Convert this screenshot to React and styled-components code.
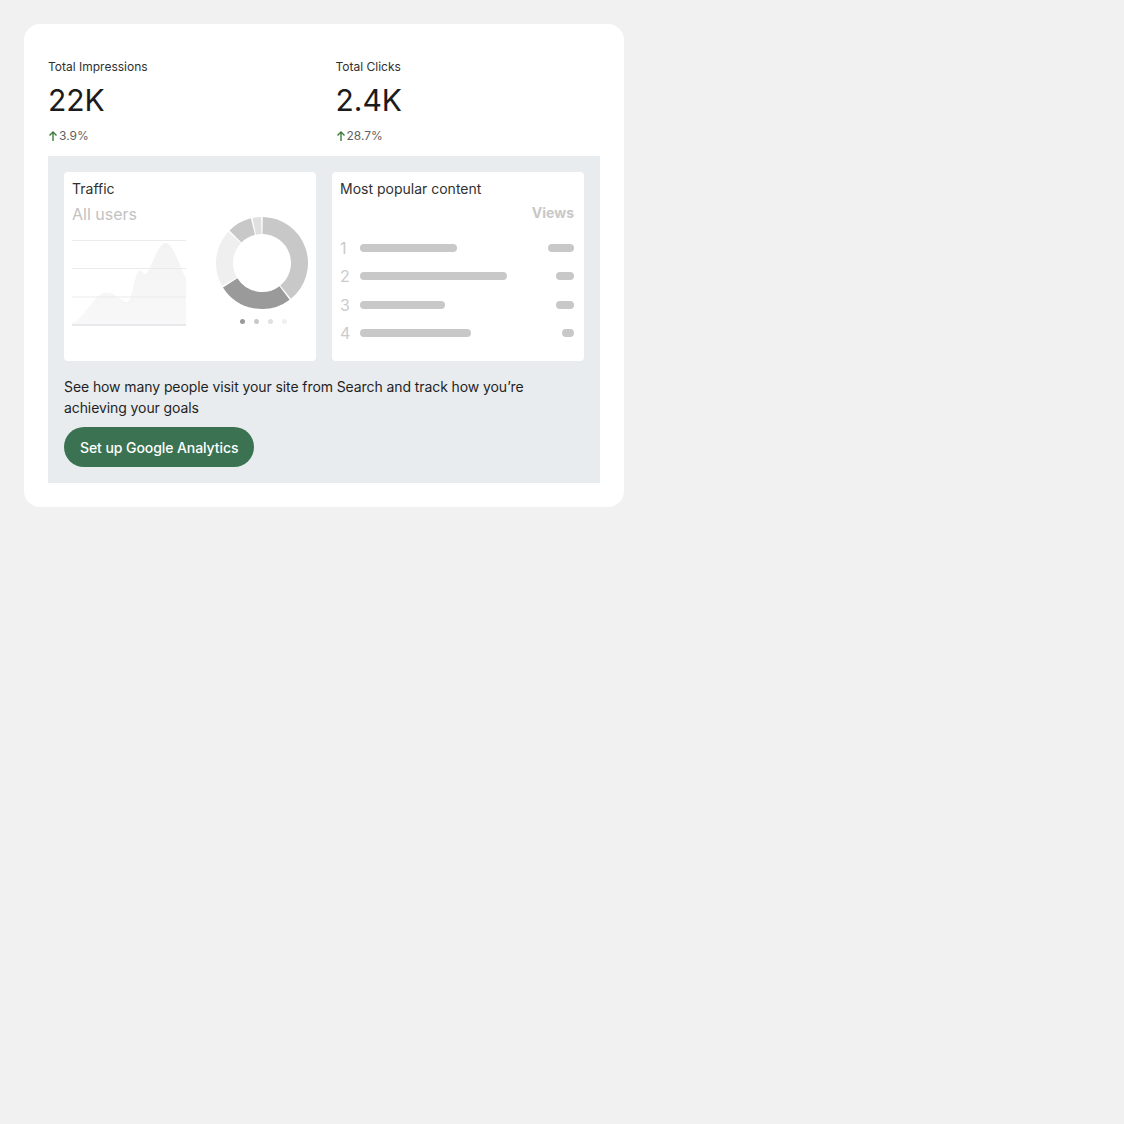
import styled, { createGlobalStyle } from 'styled-components'

const Global = createGlobalStyle`
  html, body {
    margin: 0;
    padding: 0;
    background: #f1f1f1;
    font-family: Inter, Roboto, "Noto Sans", Arial, sans-serif;
    color: #1f1f1f;
  }
`;

const Page = styled.div`
  padding: 24px;
`;

const Card = styled.div`
  width: 552px;
  background: #fff;
  border-radius: 16px;
  padding: 24px;
`;

const Stats = styled.div`
  display: grid;
  grid-template-columns: 1fr 1fr;
  column-gap: 23px;
  padding: 11px 0 12px;
`;

const Stat = styled.div`
  display: flex;
  flex-direction: column;
`;

const StatLabel = styled.div`
  font-size: 12px;
  line-height: 16px;
  color: #303030;
`;

const StatValue = styled.div`
  font-size: 30px;
  line-height: 36px;
  margin-top: 7px;
  color: #1b1b1b;
`;

const Change = styled.div`
  display: flex;
  align-items: center;
  font-size: 12px;
  line-height: 16px;
  color: #5f5f5f;
  margin-top: 10px;
`;

const Panel = styled.div`
  background: #e8ecef;
  padding: 16px;
  display: flex;
  flex-direction: column;
`;

const Previews = styled.div`
  display: grid;
  grid-template-columns: 1fr 1fr;
  gap: 16px;
`;

const Preview = styled.div`
  background: #fff;
  border-radius: 4px;
  height: 189px;
  padding: 8px;
  box-sizing: border-box;
  display: flex;
  flex-direction: column;
`;

const PreviewTitle = styled.div`
  font-size: 14px;
  line-height: 18px;
  color: #303030;
`;

const Sub = styled.div`
  font-size: 16px;
  line-height: 20px;
  color: #c2c2c2;
  margin-top: 6px;
`;

const ChartRow = styled.div`
  display: flex;
  justify-content: space-between;
  align-items: flex-start;
  margin-top: -9px;
`;

const DonutCol = styled.div`
  display: flex;
  flex-direction: column;
  align-items: center;
  margin-right: -2px;
`;

const Dots = styled.div`
  display: flex;
  gap: 9px;
  margin-top: 8px;
  margin-left: 2px;
`;

const Dot = styled.span`
  width: 5px;
  height: 5px;
  border-radius: 50%;
  background: ${({ c }) => c};
`;

const ViewsHead = styled.div`
  text-align: right;
  font-size: 14px;
  font-weight: 700;
  color: #c8c8c8;
  line-height: 18px;
  margin-top: 6px;
  padding-right: 2px;
`;

const Rows = styled.div`
  display: flex;
  flex-direction: column;
  gap: 8px;
  margin-top: 16px;
`;

const Row = styled.div`
  display: flex;
  align-items: center;
  height: 20.3px;
  padding-right: 2px;
`;

const Num = styled.span`
  width: 20px;
  font-size: 16px;
  color: #cbcbcb;
`;

const Bar = styled.span`
  height: 8px;
  border-radius: 4px;
  background: #c8c8c8;
  width: ${({ w }) => w}px;
`;

const Spacer = styled.span`
  flex: 1;
`;

const Desc = styled.p`
  margin: 15px 0 0;
  font-size: 14px;
  line-height: 21px;
  letter-spacing: -0.09px;
  color: #1f1f1f;
  max-width: 470px;
`;

const Button = styled.button`
  align-self: flex-start;
  margin-top: 9px;
  height: 40px;
  padding: 0 16px;
  border: none;
  border-radius: 20px;
  background: #3b7352;
  color: #fff;
  font-family: inherit;
  font-size: 14px;
  font-weight: 500;
  letter-spacing: -0.08px;
`;

function Arrow() {
  return (
    <svg width="10" height="12" viewBox="0 0 10 12" style={{ marginRight: 1 }}>
      <path d="M5 11V2M1.5 5.5L5 2l3.5 3.5" fill="none" stroke="#3f7d3c" strokeWidth="1.4" />
    </svg>
  );
}

function AreaChart() {
  return (
    <svg width="116" height="88" viewBox="0 0 116 88" style={{ marginTop: 25 }}>
      <defs>
        <linearGradient id="fade" x1="0" y1="0" x2="0" y2="1">
          <stop offset="0" stopColor="#f3f3f3" />
          <stop offset="1" stopColor="#f8f8f8" />
        </linearGradient>
      </defs>
      <path
        d="M0 83 C10 81 20 58 31 53 C40 50 48 60 55 62 C60 62 62 38 66 32 C69 28 71 36 74 34 C80 28 86 2 94 3 C102 5 108 28 114 38 L114 85 L0 85 Z"
        fill="url(#fade)"
      />
      {[0.5, 28.5, 57].map(y => (
        <line key={y} x1="0" x2="114" y1={y} y2={y} stroke="#ebebef" strokeWidth="1" />
      ))}
      <line x1="0" x2="114" y1="85" y2="85" stroke="#e2e2e8" strokeWidth="1.5" />
    </svg>
  );
}

function arc(cx, cy, r, a0, a1) {
  const p = a => [cx + r * Math.sin((a * Math.PI) / 180), cy - r * Math.cos((a * Math.PI) / 180)];
  const [x0, y0] = p(a0);
  const [x1, y1] = p(a1);
  const large = a1 - a0 > 180 ? 1 : 0;
  return `M${x0} ${y0} A${r} ${r} 0 ${large} 1 ${x1} ${y1}`;
}

const segments = [
  { a0: 0, a1: 142, c: '#c8c8c8' },
  { a0: 142, a1: 239, c: '#9a9a9a' },
  { a0: 239, a1: 314, c: '#efefef' },
  { a0: 314, a1: 347, c: '#c8c8c8' },
  { a0: 347, a1: 360, c: '#e0e0e0' },
];

function Donut() {
  return (
    <svg width="96" height="96" viewBox="0 0 96 96">
      {segments.map((s, i) => (
        <path key={i} d={arc(48, 48, 37.5, s.a0 + 1, s.a1 - 1)} fill="none" stroke={s.c} strokeWidth="17" />
      ))}
    </svg>
  );
}

const rows = [
  { n: 1, w: 97, v: 26 },
  { n: 2, w: 147, v: 18 },
  { n: 3, w: 85, v: 18 },
  { n: 4, w: 111, v: 12 },
];

export default function App() {
  return (
    <Page>
      <Global />
      <Card>
        <Stats>
          <Stat>
            <StatLabel>Total Impressions</StatLabel>
            <StatValue>22K</StatValue>
            <Change><Arrow />3.9%</Change>
          </Stat>
          <Stat>
            <StatLabel>Total Clicks</StatLabel>
            <StatValue>2.4K</StatValue>
            <Change><Arrow />28.7%</Change>
          </Stat>
        </Stats>
        <Panel>
          <Previews>
            <Preview>
              <PreviewTitle>Traffic</PreviewTitle>
              <Sub>All users</Sub>
              <ChartRow>
                <AreaChart />
                <DonutCol>
                  <Donut />
                  <Dots>
                    <Dot c="#9a9a9a" />
                    <Dot c="#c8c8c8" />
                    <Dot c="#e0e0e0" />
                    <Dot c="#efefef" />
                  </Dots>
                </DonutCol>
              </ChartRow>
            </Preview>
            <Preview>
              <PreviewTitle>Most popular content</PreviewTitle>
              <ViewsHead>Views</ViewsHead>
              <Rows>
                {rows.map(r => (
                  <Row key={r.n}>
                    <Num>{r.n}</Num>
                    <Bar w={r.w} />
                    <Spacer />
                    <Bar w={r.v} />
                  </Row>
                ))}
              </Rows>
            </Preview>
          </Previews>
          <Desc>See how many people visit your site from Search and track how you’re achieving your goals</Desc>
          <Button>Set up Google Analytics</Button>
        </Panel>
      </Card>
    </Page>
  );
}
